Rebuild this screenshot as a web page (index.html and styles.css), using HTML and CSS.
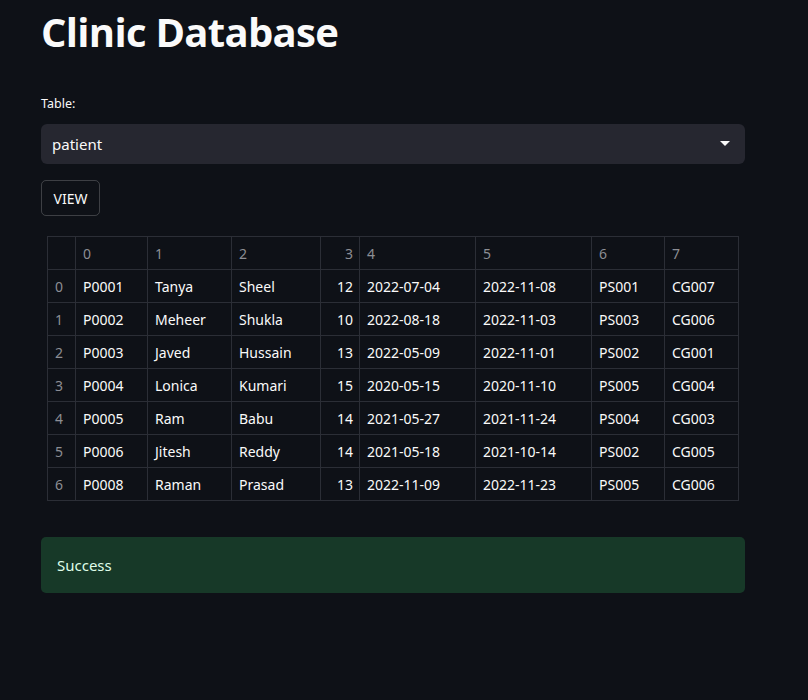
FILE: index.html
```html
<!DOCTYPE html>
<html>
<head>
<meta charset="utf-8">
<link rel="stylesheet" href="styles.css">
</head>
<body>
<main class="main">
  <h1 class="title">Clinic Database</h1>
  <label class="label">Table:</label>
  <div class="select">
    <span>patient</span>
    <svg class="caret" width="10" height="6" viewBox="0 0 10 6"><path d="M0 0 H10 L5 5 Z" fill="#fafafa"/></svg>
  </div>
  <button class="btn">VIEW</button>
  <div class="frame">
    <table class="df">
      <colgroup>
        <col style="width:28px"><col style="width:72px"><col style="width:84px"><col style="width:89px"><col style="width:39px"><col style="width:116px"><col style="width:116px"><col style="width:73px"><col style="width:74px">
      </colgroup>
      <thead>
        <tr><th></th><th>0</th><th>1</th><th>2</th><th class="num">3</th><th>4</th><th>5</th><th>6</th><th>7</th></tr>
      </thead>
      <tbody>
        <tr><th>0</th><td>P0001</td><td>Tanya</td><td>Sheel</td><td class="num">12</td><td>2022-07-04</td><td>2022-11-08</td><td>PS001</td><td>CG007</td></tr>
        <tr><th>1</th><td>P0002</td><td>Meheer</td><td>Shukla</td><td class="num">10</td><td>2022-08-18</td><td>2022-11-03</td><td>PS003</td><td>CG006</td></tr>
        <tr><th>2</th><td>P0003</td><td>Javed</td><td>Hussain</td><td class="num">13</td><td>2022-05-09</td><td>2022-11-01</td><td>PS002</td><td>CG001</td></tr>
        <tr><th>3</th><td>P0004</td><td>Lonica</td><td>Kumari</td><td class="num">15</td><td>2020-05-15</td><td>2020-11-10</td><td>PS005</td><td>CG004</td></tr>
        <tr><th>4</th><td>P0005</td><td>Ram</td><td>Babu</td><td class="num">14</td><td>2021-05-27</td><td>2021-11-24</td><td>PS004</td><td>CG003</td></tr>
        <tr><th>5</th><td>P0006</td><td>Jitesh</td><td>Reddy</td><td class="num">14</td><td>2021-05-18</td><td>2021-10-14</td><td>PS002</td><td>CG005</td></tr>
        <tr><th>6</th><td>P0008</td><td>Raman</td><td>Prasad</td><td class="num">13</td><td>2022-11-09</td><td>2022-11-23</td><td>PS005</td><td>CG006</td></tr>
      </tbody>
    </table>
  </div>
  <div class="alert">Success</div>
</main>
</body>
</html>
```
FILE: styles.css
```css
html, body {
  margin: 0;
  padding: 0;
  background: #0e1117;
  color: #fafafa;
  font-family: "Noto Sans", "Open Sans", sans-serif;
}
.main {
  width: 704px;
  padding: 0 0 0 41px;
  display: flex;
  flex-direction: column;
  align-items: stretch;
}
.title {
  font-family: "Open Sans", "Noto Sans", sans-serif;
  font-weight: 700;
  font-size: 40px;
  letter-spacing: -0.7px;
  line-height: 1;
  margin: 12px 0 0 0;
  height: 50px;
}
.label {
  font-size: 12.5px;
  margin-top: 34px;
  line-height: 16px;
  height: 16px;
}
.select {
  margin-top: 12px;
  height: 40px;
  background: #262730;
  border-radius: 6px;
  display: flex;
  align-items: center;
  justify-content: space-between;
  padding: 0 15px 0 11px;
  font-size: 15px;
}
.caret {
  display: block;
}
.btn {
  align-self: flex-start;
  margin-top: 16px;
  height: 36px;
  width: 59px;
  background: transparent;
  color: #fafafa;
  border: 1px solid rgba(250,250,250,0.2);
  border-radius: 5px;
  font-family: "Noto Sans", sans-serif;
  font-size: 14px;
  padding: 0;
}
.frame {
  margin-top: 20px;
  margin-left: 6px;
  width: 692px;
}
.df {
  border-collapse: collapse;
  table-layout: fixed;
  width: 692px;
  font-size: 14px;
}
.df th, .df td {
  border: 1px solid #2b2e36;
  height: 32px;
  padding: 0 7px;
  text-align: left;
  font-weight: 400;
  white-space: nowrap;
}
.df td { color: #fafafa; }
.df thead th, .df tbody th { color: #8c8e94; }
.df .num { text-align: right; padding-right: 6px; }
.alert {
  margin-top: 36px;
  height: 56px;
  background: #173928;
  border-radius: 5px;
  color: #dffde9;
  font-size: 15px;
  display: flex;
  align-items: center;
  padding-left: 16px;
}
```
